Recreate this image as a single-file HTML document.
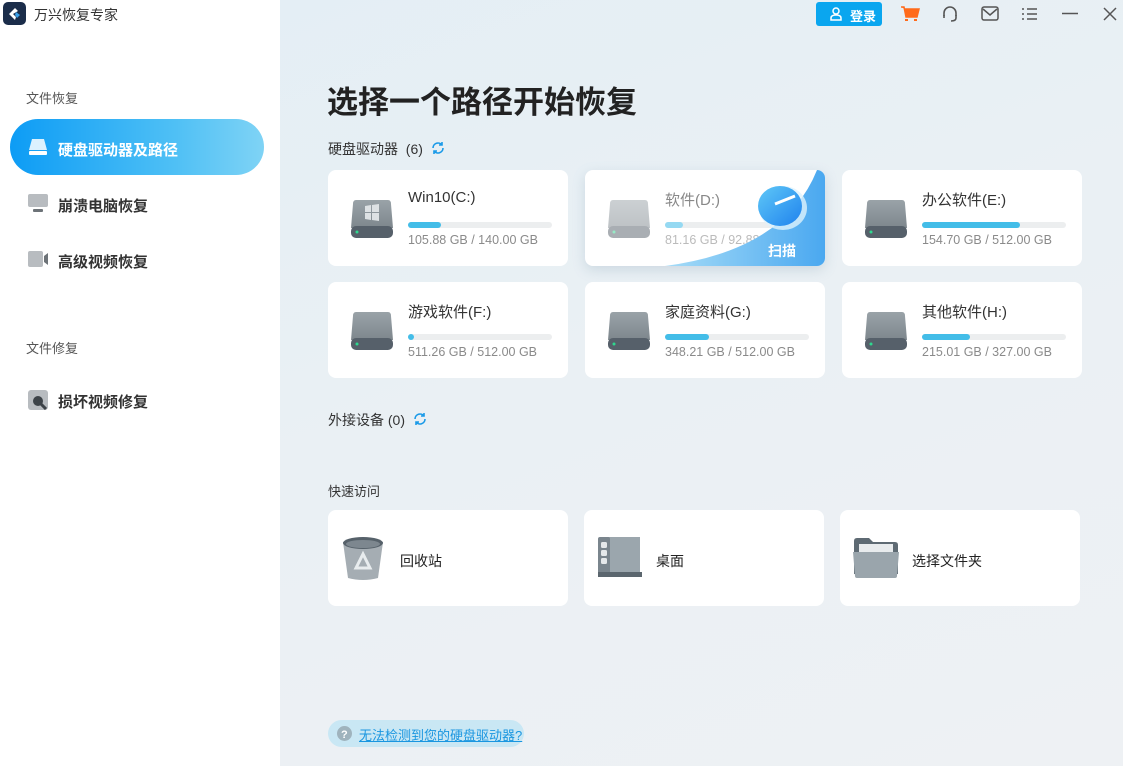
<!DOCTYPE html>
<html><head><meta charset="utf-8"><style>
*{margin:0;padding:0;box-sizing:border-box}
body{width:1123px;height:766px;overflow:hidden;font-family:"Liberation Sans","Noto Sans CJK SC",sans-serif;background:linear-gradient(160deg,#e3eef5 0%,#eaf0f4 50%,#eef1f4 100%);position:relative;color:#222}
.side{position:absolute;left:0;top:0;width:280px;height:766px;background:#fff}
.abs{position:absolute}
.card{position:absolute;background:#fff;border-radius:8px;width:240px;height:96px}
.t{position:absolute;left:80px;top:19px;font-size:15px;color:#333}
.bar{position:absolute;left:80px;top:52px;width:144px;height:6px;border-radius:3px;background:#eceeef}
.bar i{display:block;height:6px;border-radius:3px;background:#43bde8}
.sz{position:absolute;left:80px;top:63px;font-size:12.5px;color:#8a8a8a}
.disk{position:absolute;left:23px;top:28px}
.nav{position:absolute;left:58px;font-size:15px;font-weight:bold;color:#333}
.sec{position:absolute;font-size:14px;color:#333}
</style></head><body>
<div class="side">
 <div class="abs" style="left:3px;top:2px;width:23px;height:23px;border-radius:5px;background:#1b2d4a"></div>
 <svg class="abs" style="left:6px;top:6px" width="17" height="16"><path d="M3 8 L9 2 L12 5 L7 8 L10 11 L9 14 Z" fill="#fff"/><path d="M10 6 L14 9 L11 12 L9 9Z" fill="#3aa0e8"/></svg>
 <div class="abs" style="left:34px;top:5px;font-size:14px;color:#333">万兴恢复专家</div>
 <div class="abs" style="left:26px;top:88px;font-size:13px;color:#555">文件恢复</div>
 <div class="abs" style="left:10px;top:119px;width:254px;height:56px;border-radius:28px;background:linear-gradient(90deg,#0d9cf5,#4fc0f5 65%,#7fd3f5)"></div>
 <svg class="abs" style="left:28px;top:138px" width="20" height="18"><path d="M4 1 H16 L19 12 H1Z" fill="#fff" opacity=".85"/><rect x="1" y="13" width="18" height="4" rx="1" fill="#fff"/></svg>
 <div class="nav" style="top:139px;color:#fff">硬盘驱动器及路径</div>
 <svg class="abs" style="left:28px;top:194px" width="20" height="19"><rect x="0" y="0" width="20" height="13" rx="2" fill="#b8bcc0"/><rect x="5" y="15" width="10" height="3" rx="1" fill="#6d7378"/></svg>
 <div class="nav" style="top:195px">崩溃电脑恢复</div>
 <svg class="abs" style="left:28px;top:250px" width="21" height="18"><rect x="0" y="1" width="15" height="16" rx="2" fill="#b8bcc0"/><path d="M16 6 L20 3 V15 L16 12Z" fill="#6d7378"/></svg>
 <div class="nav" style="top:251px">高级视频恢复</div>
 <div class="abs" style="left:26px;top:338px;font-size:13px;color:#555">文件修复</div>
 <svg class="abs" style="left:28px;top:390px" width="20" height="20"><rect x="0" y="0" width="20" height="20" rx="3" fill="#b8bcc0"/><circle cx="10" cy="11" r="5" fill="#3d4348"/><path d="M13 14 L18 19" stroke="#3d4348" stroke-width="3"/></svg>
 <div class="nav" style="top:391px">损坏视频修复</div>
</div>

<div class="abs" style="left:816px;top:2px;width:66px;height:24px;border-radius:3px;background:#0aa6ef"></div>
<svg class="abs" style="left:830px;top:7px" width="12" height="14" fill="none" stroke="#fff" stroke-width="1.5"><circle cx="6" cy="4" r="3"/><path d="M1 13 V11 Q1 8 6 8 Q11 8 11 11 V13Z"/></svg>
<div class="abs" style="left:850px;top:6px;font-size:13px;font-weight:bold;color:#fff">登录</div>
<svg class="abs" style="left:900px;top:5px" width="20" height="18"><path d="M1 2 H4 L6 12 H17 L19 4 H5" fill="#ff6a1a" stroke="#ff6a1a" stroke-width="1.5"/><rect x="5" y="14" width="3" height="2" fill="#ff6a1a"/><rect x="14" y="14" width="3" height="2" fill="#ff6a1a"/></svg>
<svg class="abs" style="left:941px;top:5px" width="18" height="18" fill="none" stroke="#555" stroke-width="1.6"><path d="M3 11 V8 A6 6 0 0 1 15 8 V11"/><path d="M3 10 V13 M15 10 V13 Q15 16 10 16"/></svg>
<svg class="abs" style="left:981px;top:6px" width="18" height="16" fill="none" stroke="#555" stroke-width="1.5"><rect x="1" y="1" width="16" height="13" rx="2"/><path d="M2 3 L9 9 L16 3"/></svg>
<svg class="abs" style="left:1021px;top:7px" width="17" height="14" stroke="#555" stroke-width="1.5"><path d="M1 2H3M6 2H16M1 7H3M6 7H16M1 12H3M6 12H16"/></svg>
<svg class="abs" style="left:1062px;top:12px" width="16" height="3"><path d="M0 1.5H16" stroke="#555" stroke-width="1.5"/></svg>
<svg class="abs" style="left:1103px;top:7px" width="14" height="14" stroke="#555" stroke-width="1.5"><path d="M1 1L13 13M13 1L1 13"/></svg>

<div class="abs" style="left:327px;top:77px;font-size:31px;font-weight:bold;color:#222">选择一个路径开始恢复</div>
<div class="sec" style="left:328px;top:139px">硬盘驱动器 &nbsp;(6)</div>
<svg class="abs" style="left:431px;top:141px" width="14" height="14" fill="none" stroke="#1a9ae8" stroke-width="1.6"><path d="M2 7 A5 5 0 0 1 11 4 M12 7 A5 5 0 0 1 3 10"/><path d="M11 1 V4 H8 M3 13 V10 H6"/></svg>

<svg width="0" height="0" style="position:absolute"><defs>
<linearGradient id="dg" x1="0" y1="0" x2="0" y2="1"><stop offset="0" stop-color="#9aa3a8"/><stop offset="1" stop-color="#7e878d"/></linearGradient>
<g id="dk"><path d="M5 2 H37 Q40 2 40 6 L42 30 H0 L2 6 Q2 2 5 2Z" fill="url(#dg)"/><rect x="0" y="28" width="42" height="12" rx="5" fill="#56606a"/><circle cx="6" cy="34" r="1.5" fill="#2fd88f"/></g>
</defs></svg>

<div class="card" style="left:328px;top:170px"><svg class="disk" width="42" height="40"><use href="#dk"/><path d="M14 8 L20 7 V14 H14Z M21 7 L28 6 V14 H21Z M14 15 H20 V22 L14 21Z M21 15 H28 V23 L21 22Z" fill="#dde1e4"/></svg><div class="t">Win10(C:)</div><div class="bar"><i style="width:33px"></i></div><div class="sz">105.88 GB / 140.00 GB</div></div>
<div class="card" style="left:585px;top:170px;overflow:hidden;box-shadow:0 4px 12px rgba(120,150,170,.25)"><svg class="disk" width="42" height="40" opacity=".5"><use href="#dk"/></svg><div class="t" style="color:#888">软件(D:)</div><div class="bar"><i style="width:18px;background:#95d9f2"></i></div><div class="sz" style="color:#bbb">81.16 GB / 92.88 GB</div>
<svg class="abs" style="left:0;top:0" width="240" height="96"><defs><linearGradient id="g1" x1="0" y1="0" x2="1" y2="0"><stop offset="0" stop-color="#a6dcf7"/><stop offset="1" stop-color="#4aa8f0"/></linearGradient><linearGradient id="g2" x1="0" y1="0" x2="1" y2="1"><stop offset="0" stop-color="#5fc8f7"/><stop offset="1" stop-color="#1f82ee"/></linearGradient></defs><path d="M80 96 Q200 80 232 0 H240 V96Z" fill="url(#g1)"/><ellipse cx="198" cy="38" rx="24" ry="22" fill="#dff2fc" opacity=".8"/><ellipse cx="195" cy="36" rx="22" ry="20" fill="url(#g2)"/><path d="M190 34 L210 26" stroke="#fff" stroke-width="3"/><text x="183" y="86" font-size="14" font-weight="bold" fill="#fff" font-family="Liberation Sans,Noto Sans CJK SC,sans-serif">扫描</text></svg></div>
<div class="card" style="left:842px;top:170px"><svg class="disk" width="42" height="40"><use href="#dk"/></svg><div class="t">办公软件(E:)</div><div class="bar"><i style="width:98px"></i></div><div class="sz">154.70 GB / 512.00 GB</div></div>
<div class="card" style="left:328px;top:282px"><svg class="disk" width="42" height="40"><use href="#dk"/></svg><div class="t">游戏软件(F:)</div><div class="bar"><i style="width:6px"></i></div><div class="sz">511.26 GB / 512.00 GB</div></div>
<div class="card" style="left:585px;top:282px"><svg class="disk" width="42" height="40"><use href="#dk"/></svg><div class="t">家庭资料(G:)</div><div class="bar"><i style="width:44px"></i></div><div class="sz">348.21 GB / 512.00 GB</div></div>
<div class="card" style="left:842px;top:282px"><svg class="disk" width="42" height="40"><use href="#dk"/></svg><div class="t">其他软件(H:)</div><div class="bar"><i style="width:48px"></i></div><div class="sz">215.01 GB / 327.00 GB</div></div>

<div class="sec" style="left:328px;top:410px">外接设备 (0)</div>
<svg class="abs" style="left:413px;top:412px" width="14" height="14" fill="none" stroke="#1a9ae8" stroke-width="1.6"><path d="M2 7 A5 5 0 0 1 11 4 M12 7 A5 5 0 0 1 3 10"/><path d="M11 1 V4 H8 M3 13 V10 H6"/></svg>
<div class="sec" style="left:328px;top:481px;font-size:13px">快速访问</div>

<div class="card" style="left:328px;top:510px"><svg class="abs" style="left:14px;top:26px" width="42" height="45"><path d="M1 6 L6 42 Q21 46 36 42 L41 6Z" fill="#a5adb3"/><ellipse cx="21" cy="7" rx="20" ry="6" fill="#56616a"/><ellipse cx="21" cy="8" rx="17" ry="4" fill="#7d878f"/><path d="M21 18 L14 32 H28Z" fill="none" stroke="#e8ecee" stroke-width="3"/></svg><div class="abs" style="left:72px;top:41px;font-size:14px">回收站</div></div>
<div class="card" style="left:584px;top:510px"><svg class="abs" style="left:14px;top:26px" width="44" height="42"><path d="M4 1 H42 V38 H4Z" fill="#9ba6ad"/><rect x="0" y="1" width="12" height="40" rx="2" fill="#7a858d"/><rect x="0" y="36" width="44" height="5" fill="#5b666e"/><rect x="3" y="6" width="6" height="6" rx="1.5" fill="#e5e8ea"/><rect x="3" y="14" width="6" height="6" rx="1.5" fill="#e5e8ea"/><rect x="3" y="22" width="6" height="6" rx="1.5" fill="#e5e8ea"/></svg><div class="abs" style="left:72px;top:41px;font-size:14px">桌面</div></div>
<div class="card" style="left:840px;top:510px"><svg class="abs" style="left:13px;top:28px" width="46" height="40"><path d="M1 3 Q1 0 4 0 H16 L20 4 H42 Q45 4 45 7 V36 H1Z" fill="#5e6a73"/><rect x="6" y="6" width="34" height="10" fill="#e8ebed"/><path d="M0 14 H46 L44 38 Q44 40 42 40 H4 Q2 40 2 38Z" fill="#9aa5ac"/></svg><div class="abs" style="left:72px;top:41px;font-size:14px">选择文件夹</div></div>

<div class="abs" style="left:328px;top:720px;width:196px;height:27px;border-radius:14px;background:#c9e7f4"></div>
<svg class="abs" style="left:337px;top:726px" width="15" height="15"><circle cx="7.5" cy="7.5" r="7.5" fill="#9fb3bd"/><text x="4" y="12" font-size="11" font-weight="bold" fill="#fff" font-family="Liberation Sans">?</text></svg>
<div class="abs" style="left:359px;top:725px;font-size:13px;color:#1a96e0;text-decoration:underline">无法检测到您的硬盘驱动器?</div>
</body></html>
